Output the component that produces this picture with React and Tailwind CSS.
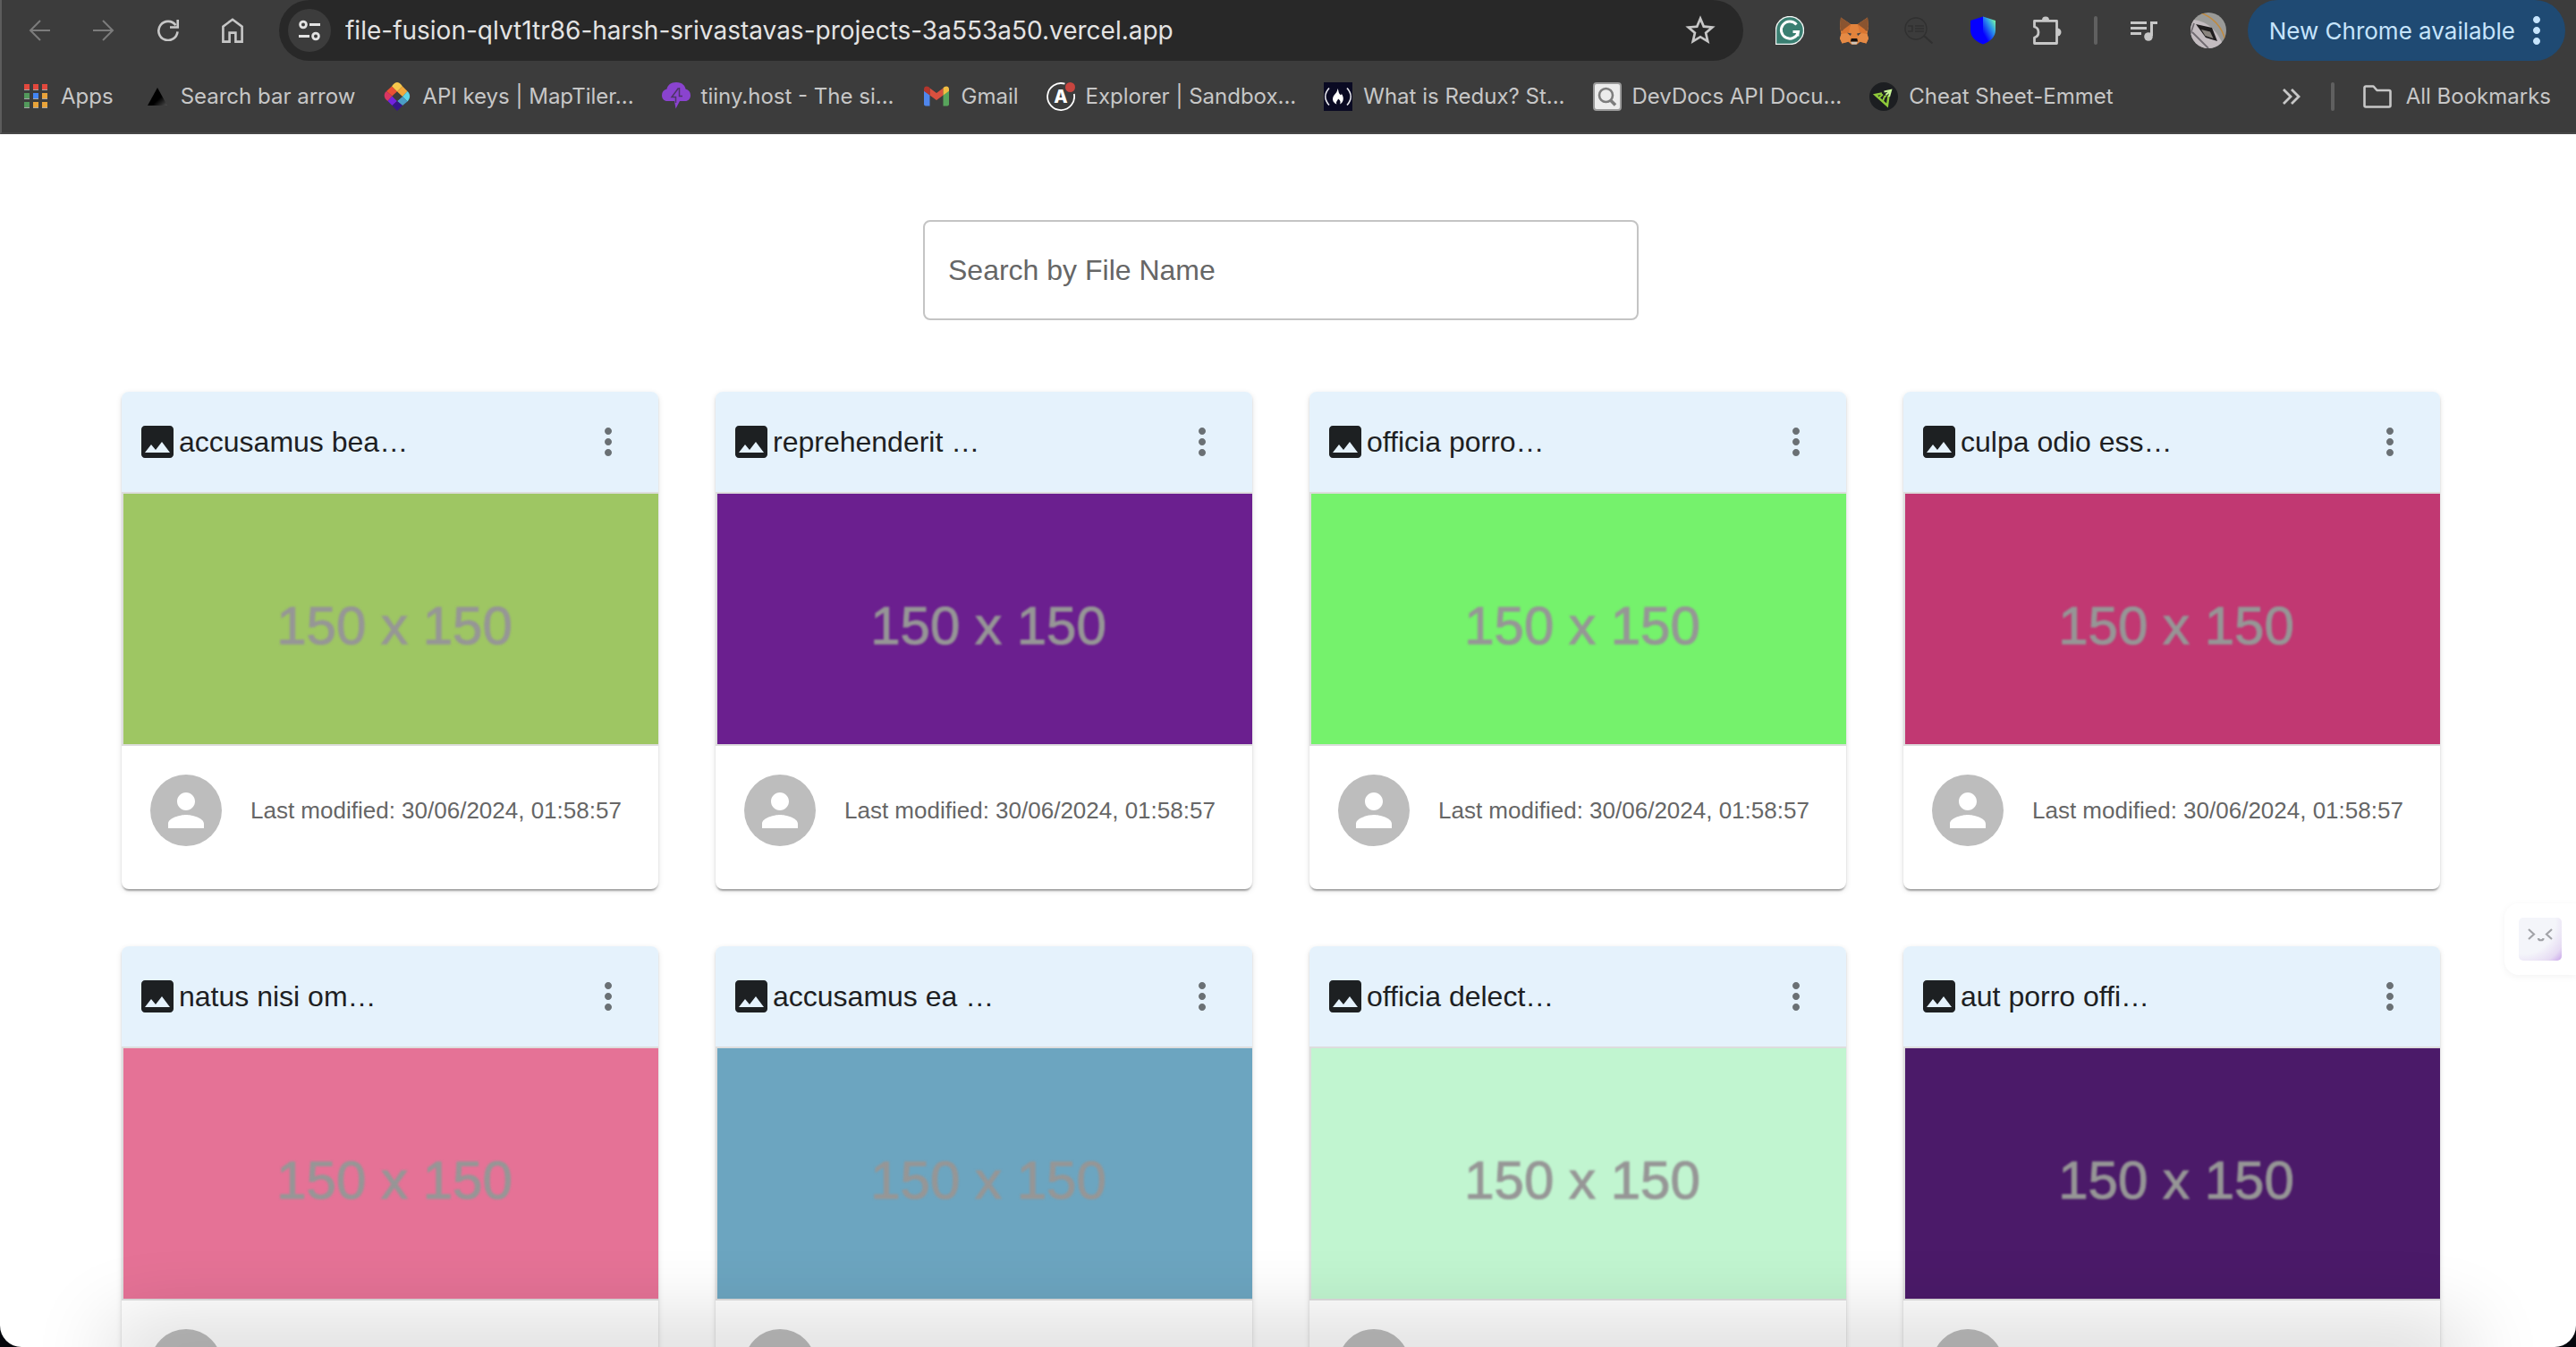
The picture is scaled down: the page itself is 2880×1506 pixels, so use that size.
import React from "react";

const files = [
  { title: "accusamus bea…", color: "bg-[#9ec663]" },
  { title: "reprehenderit …", color: "bg-[#6b1f8f]" },
  { title: "officia porro…", color: "bg-[#75f26c]" },
  { title: "culpa odio ess…", color: "bg-[#c13872]" },
  { title: "natus nisi om…", color: "bg-[#e57296]" },
  { title: "accusamus ea …", color: "bg-[#6ca5c0]" },
  { title: "officia delect…", color: "bg-[#c1f5d0]" },
  { title: "aut porro offi…", color: "bg-[#4b1a69]" },
];

function BackIcon() {
  return (
    <svg viewBox="0 0 24 24" className="size-6" fill="none" stroke="currentColor" strokeWidth="2">
      <path d="M24 12H2M13 1 2 12l11 11" />
    </svg>
  );
}

function ForwardIcon() {
  return (
    <svg viewBox="0 0 24 24" className="size-6" fill="none" stroke="currentColor" strokeWidth="2">
      <path d="M0 12h22M11 1l11 11-11 11" />
    </svg>
  );
}

function ReloadIcon() {
  return (
    <svg viewBox="0 0 24 24" className="size-6" fill="none" stroke="currentColor" strokeWidth="2.6">
      <path d="M20.5 6.2A10.6 10.6 0 1 0 22.5 13.4" />
      <path d="M22.7 0v8.5H14" />
    </svg>
  );
}

function HomeIcon() {
  return (
    <svg viewBox="0 0 24 28" className="h-7 w-6" fill="none" stroke="currentColor" strokeWidth="2.6">
      <path d="M1.4 26.6V9.6L12 1.8l10.6 7.8v17H15.4v-10H8.6v10z" />
    </svg>
  );
}

function TuneIcon() {
  return (
    <svg viewBox="0 0 24 24" className="size-6" fill="none" stroke="currentColor" strokeWidth="2.8">
      <circle cx="5" cy="5.5" r="3.4" />
      <path d="M12 5.5h12M0 18.5h12" />
      <circle cx="19" cy="18.5" r="3.4" />
    </svg>
  );
}

function StarIcon() {
  return (
    <svg viewBox="0 0 24 24" className="size-10" fill="currentColor">
      <path d="M22 9.24l-7.19-.62L12 2 9.19 8.63 2 9.24l5.46 4.73L5.82 21 12 17.27 18.18 21l-1.63-7.03L22 9.24zM12 15.4l-3.76 2.27 1-4.28-3.32-2.88 4.38-.38L12 6.1l1.71 4.04 4.38.38-3.32 2.88 1 4.28L12 15.4z" />
    </svg>
  );
}

function GrammarlyIcon() {
  return (
    <svg viewBox="0 0 32 32" className="size-8">
      <path d="M.5 31.500V16A15.500 15.500 0 1 1 16 31.500z" fill="#3a7f72" stroke="#f2f5f4" strokeWidth="1.400" />
      <path d="M23.500 9.500A9.600 9.600 0 1 0 25.400 17.600H19.500" fill="none" stroke="#fff" strokeWidth="3" />
      <path d="M25.600 16.100v6.400" stroke="#fff" strokeWidth="1.600" />
    </svg>
  );
}

function FoxIcon() {
  return (
    <svg viewBox="0 0 32 32" className="size-8">
      <path d="M1 1.500 12 9h8L31 1.500 32 12l-1.500 8 1.500 5-2.500 5.500-7-1.800-3.500 3h-6l-3.500-3-7 1.800L0 25l1.500-5L0 12z" fill="#e2833c" />
      <path d="M1 1.500 12 9l-2 5.500-8.500 2.500L0 12zM31 1.500 20 9l2 5.500 8.500 2.500L32 12z" fill="#8a5430" />
      <path d="m12 9-2 9-8.500 2L4 15zM20 9l2 9 8.500 2L28 15z" fill="#d97531" />
      <path d="m1.500 20 9-.5 2 5-3 4-7 2L0 25zM30.500 20l-9-.5-2 5 3 4 7 2L32 25z" fill="#e58a45" />
      <path d="m8 18.500 5 1-1.200 2.500zM24 18.500l-5 1 1.200 2.500z" fill="#3f4247" />
      <path d="M12 28.500h8l-1.500 3h-5z" fill="#cfc5ba" />
      <path d="M12.800 25h6.400l1 3.500h-8.400z" fill="#15110f" />
    </svg>
  );
}

function ReaderSearchIcon() {
  return (
    <svg viewBox="0 0 32 32" className="size-8" fill="none" stroke="#303030" strokeWidth="1.400">
      <circle cx="13" cy="14" r="12" />
      <path d="m22 22 9.500 8.500" strokeWidth="2.200" />
      <path d="M4 11h5v6H4M12 11h10M12 14h10M12 17h10" />
    </svg>
  );
}

function ShieldIcon() {
  return (
    <svg viewBox="0 0 28 32" className="h-8 w-7">
      <defs>
        <linearGradient id="shieldRight" x1="1" y1="0" x2="0.200" y2="1">
          <stop offset="0.080" stopColor="#7dfba0" />
          <stop offset="0.400" stopColor="#2d9ce8" />
          <stop offset="0.850" stopColor="#0500ff" />
        </linearGradient>
      </defs>
      <path d="M14 .5 0 5v10.500C0 23 5.500 28.500 14 31.500z" fill="#0500ff" />
      <path d="M14 .5 28 5v10.500c0 7.500-5.500 13-14 16z" fill="url(#shieldRight)" />
    </svg>
  );
}

function PuzzleIcon() {
  return (
    <svg viewBox="0 0 32 32" className="size-8" fill="none" stroke="currentColor" strokeWidth="2.800" strokeLinejoin="round">
      <path d="M1.500 5.400H26.500V30.500H1.500V24c6-1.500 6-10.500 0-12z" />
      <path d="M10 4.500a4 4 0 0 1 8 0z" fill="currentColor" stroke="none" />
      <path d="M27 13.500a4.500 4.500 0 0 1 0 9z" fill="currentColor" stroke="none" />
    </svg>
  );
}

function QueueIcon() {
  return (
    <svg viewBox="0 0 32 24" className="h-6 w-8" fill="none" stroke="currentColor" strokeWidth="3">
      <path d="M1 3.500h18M1 9.500h18M1 15.500h12" />
      <path d="M24.500 18V3.500H31" />
      <circle cx="21" cy="19" r="4.800" fill="currentColor" stroke="none" />
    </svg>
  );
}

function ProfilePicture() {
  return (
    <svg viewBox="0 0 40 40" className="size-10">
      <defs>
        <clipPath id="profileClip">
          <circle cx="20" cy="20" r="20" />
        </clipPath>
      </defs>
      <g clipPath="url(#profileClip)">
        <rect width="40" height="40" fill="#9a9a98" />
        <path d="M0 8c16 0 30 10 38 32H0z" fill="#c3bcc0" />
        <path d="M10 0c14 4 26 16 29 32" stroke="#c08a3e" strokeWidth="1.500" fill="none" />
        <path d="m6 13 18 4 6 15-13-4z" fill="#1f1d1e" />
        <path d="m12 19 10 2.500 3.500 7.500-9-3z" fill="#8a857f" />
        <path d="m2 22 10 10 8 8M4 12l-4 12" stroke="#6f6a70" strokeWidth="1.800" fill="none" />
      </g>
    </svg>
  );
}

function MoreIcon({ className }) {
  return (
    <svg viewBox="0 0 24 24" className={className} fill="currentColor">
      <path d="M12 8c1.100 0 2-.9 2-2s-.9-2-2-2-2 .9-2 2 .9 2 2 2zm0 2c-1.100 0-2 .9-2 2s.9 2 2 2 2-.9 2-2-.9-2-2-2zm0 6c-1.100 0-2 .9-2 2s.9 2 2 2 2-.9 2-2-.9-2-2-2z" />
    </svg>
  );
}

function AppsIcon() {
  const dots = ["#e2483d", "#e2483d", "#e2483d", "#539a5c", "#4285f4", "#e8a33a", "#539a5c", "#e8a33a", "#e8a33a"];
  return (
    <svg viewBox="0 0 32 32" className="size-8">
      {dots.map((fill, i) => (
        <g key={i}>
          <rect x={3 + (i % 3) * 10} y={2 + Math.floor(i / 3) * 10} width="6" height="7" fill="#a8a8a8" />
          <rect x={3 + (i % 3) * 10} y={2 + Math.floor(i / 3) * 10} width="6" height="6" fill={fill} />
        </g>
      ))}
    </svg>
  );
}

function TriangleIcon() {
  return (
    <svg viewBox="0 0 32 32" className="size-8">
      <defs>
        <linearGradient id="triangleFade" x1="0" y1="0" x2="1" y2="1">
          <stop offset="0.600" stopColor="#000" />
          <stop offset="1" stopColor="#505050" />
        </linearGradient>
      </defs>
      <path d="M18 6 29 26H7z" fill="url(#triangleFade)" />
    </svg>
  );
}

function MapTilerIcon() {
  return (
    <svg viewBox="0 0 32 32" className="size-8">
      <path d="M12 2q4-4 8 0l2 2.500-6 6-6-6z" fill="#f6c64c" />
      <path d="m22 4.500 5.500 5.500-5.500 6-6-5.500z" fill="#f2a83b" />
      <path d="m10 4.500 6 6-5.500 5L4 10z" fill="#ea5034" />
      <path d="M4 10l6.500 5.500-5 5.500C1 18 .5 13 4 10z" fill="#da3562" />
      <path d="M27.500 10c4 4 3 8 0 11.500L22 16z" fill="#5fd5e6" />
      <path d="m22 16 5.500 5.500L22 26l-6-5z" fill="#4b9dc6" />
      <path d="m10.500 15.500 5.500 5.500-5.500 5-5-5z" fill="#7223e0" />
      <path d="m16 21 6 5-6 6-5.500-6z" fill="#35158a" />
      <path d="m16 10.500 5.500 5.500-5.500 5-5.500-5.500z" fill="#3c3c3c" />
    </svg>
  );
}

function TiinyIcon() {
  return (
    <svg viewBox="0 0 32 32" className="size-8">
      <path d="M16 0c6 0 9.500 3 10.500 7.500C30 8.500 32 11 32 14.500c0 4-2.500 6.500-6 6.500h-6l-4.500 8.500L14 21H6c-3.500 0-6-2.500-6-6.500C0 11 2 8.500 5.500 7.500 6.500 3 10 0 16 0z" fill="#8a43cf" />
      <path d="m18.500 6.500-7.500 10h4.500V23M19.500 6v9.500h3.500" fill="none" stroke="#4d3566" strokeWidth="1.500" />
    </svg>
  );
}

function GmailIcon() {
  return (
    <svg viewBox="0 0 32 32" className="size-8">
      <path d="M2 9.500v15A2 2 0 0 0 4 26.500h4.500V14z" fill="#4f86ec" />
      <path d="M30 9.500v15a2 2 0 0 1-2 2h-4.500V14z" fill="#58a55c" />
      <path d="M8.500 6.500v8L16 20l7.500-5.500v-8L16 12z" fill="#d9503f" />
      <path d="M2 7.500C2 4.500 5 3.800 7 5l1.500 1.200v8.300L2 9.800z" fill="#b3352c" />
      <path d="M30 7.500c0-3-3-3.700-5-2.500l-1.500 1.200v8.300L30 9.800z" fill="#f2bd42" />
    </svg>
  );
}

function ApolloIcon() {
  return (
    <svg viewBox="0 0 32 32" className="size-8">
      <path d="M20.500 1.700A15 15 0 1 0 30.800 13" fill="none" stroke="#fff" strokeWidth="1.800" />
      <circle cx="26.500" cy="5.500" r="5.500" fill="#c8453f" />
      <text x="16" y="22.500" textAnchor="middle" fontSize="20" fontWeight="800" fontFamily="Inter, sans-serif" fill="#fff">A</text>
    </svg>
  );
}

function FreeCodeCampIcon() {
  return (
    <svg viewBox="0 0 32 32" className="size-8">
      <rect width="32" height="32" fill="#0a0a23" />
      <path d="M6 6.500c-5.500 6-5.500 13 0 19M26 6.500c5.500 6 5.500 13 0 19" fill="none" stroke="#e8e8ee" strokeWidth="1.700" />
      <path d="M15.500 7c1.500 3 .5 4.500 3 7 .8.800 1.500-.3 1-1.500 3.500 4 3 9.500-1.500 12 1.500-3-.2-5-2-6-.3 2-3 3.500-1.500 6-5-2-5.500-6.500-3-10 2-2.500 3.800-4 4-7.500z" fill="#fff" />
    </svg>
  );
}

function DevDocsIcon() {
  return (
    <svg viewBox="0 0 32 32" className="size-8">
      <rect x="1" y="1" width="30" height="30" rx="3" fill="#ececec" stroke="#9a9a9a" strokeWidth="2" />
      <circle cx="14.500" cy="14.500" r="7.500" fill="none" stroke="#7d7d7d" strokeWidth="2.600" />
      <path d="m19.500 20 5.500 5.500" stroke="#7d7d7d" strokeWidth="3.600" />
    </svg>
  );
}

function EmmetIcon() {
  return (
    <svg viewBox="0 0 32 32" className="size-8">
      <circle cx="16" cy="16" r="16" fill="#1c1e21" />
      <path d="M14 12.500 6.500 14 20 26l1.500-11" fill="none" stroke="#8fca3a" strokeWidth="2.400" />
      <path d="m11 17 4-3.500M15 21l2-5 2-1" fill="none" stroke="#8fca3a" strokeWidth="2" />
      <path d="m16.500 10.500 7.500-1.500-2 7M23 10l-4.500 4" fill="none" stroke="#c9f598" strokeWidth="2.200" />
    </svg>
  );
}

function ChevronsIcon() {
  return (
    <svg viewBox="0 0 24 24" className="size-6" fill="none" stroke="currentColor" strokeWidth="2.800">
      <path d="m3 4 8 8-8 8M12 4l8 8-8 8" />
    </svg>
  );
}

function FolderIcon() {
  return (
    <svg viewBox="0 0 32 32" className="size-8" fill="none" stroke="currentColor" strokeWidth="2.600" strokeLinejoin="round">
      <path d="M1.500 26V6a1.500 1.500 0 0 1 1.500-1.500h8.500l4 4.500H29A1.500 1.500 0 0 1 30.500 10.500V26a1.500 1.500 0 0 1-1.500 1.500H3A1.500 1.500 0 0 1 1.500 26z" />
    </svg>
  );
}

const bookmarks = [
  { label: "Apps", Icon: AppsIcon },
  { label: "Search bar arrow", Icon: TriangleIcon },
  { label: "API keys | MapTiler...", Icon: MapTilerIcon },
  { label: "tiiny.host - The si...", Icon: TiinyIcon },
  { label: "Gmail", Icon: GmailIcon },
  { label: "Explorer | Sandbox...", Icon: ApolloIcon },
  { label: "What is Redux? St...", Icon: FreeCodeCampIcon },
  { label: "DevDocs API Docu...", Icon: DevDocsIcon },
  { label: "Cheat Sheet-Emmet", Icon: EmmetIcon },
];

function ToolbarButton({ label, className = "text-[#c7c7c7]", children }) {
  return (
    <button type="button" aria-label={label} className={`flex h-[68px] w-[72px] shrink-0 items-center justify-center ${className}`}>
      {children}
    </button>
  );
}

function BrowserChrome() {
  return (
    <header className="border-b-2 border-l-2 border-b-[#474747] border-l-[#5c5c5c] bg-[#3c3c3c] font-[Inter,sans-serif]">
      <div className="flex items-center pr-3 pl-1.5">
        <ToolbarButton label="Back" className="text-[#7c7c7c]"><BackIcon /></ToolbarButton>
        <ToolbarButton label="Forward" className="text-[#7c7c7c]"><ForwardIcon /></ToolbarButton>
        <ToolbarButton label="Reload"><ReloadIcon /></ToolbarButton>
        <ToolbarButton label="Home"><HomeIcon /></ToolbarButton>
        <div className="mx-4 flex h-[68px] min-w-0 flex-1 items-center rounded-full bg-[#282828] pr-7 pl-2.5">
          <button type="button" aria-label="Site information" className="flex size-12 shrink-0 items-center justify-center rounded-full bg-[#3c3c3c] text-[#e3e3e3]">
            <TuneIcon />
          </button>
          <input
            aria-label="Address"
            defaultValue="file-fusion-qlvt1tr86-harsh-srivastavas-projects-3a553a50.vercel.app"
            className="ml-4 h-12 min-w-0 flex-1 bg-transparent text-[28px] text-[#e3e3e3] outline-none"
          />
          <button type="button" aria-label="Bookmark this page" className="text-[#c7c7c7]"><StarIcon /></button>
        </div>
        <ToolbarButton label="Grammarly"><GrammarlyIcon /></ToolbarButton>
        <ToolbarButton label="Wallet"><FoxIcon /></ToolbarButton>
        <ToolbarButton label="Page search"><ReaderSearchIcon /></ToolbarButton>
        <ToolbarButton label="Shield"><ShieldIcon /></ToolbarButton>
        <ToolbarButton label="Extensions"><PuzzleIcon /></ToolbarButton>
        <div className="mx-4 h-8 w-1 rounded-full bg-[#606060]" />
        <ToolbarButton label="Media controls"><QueueIcon /></ToolbarButton>
        <ToolbarButton label="Profile"><ProfilePicture /></ToolbarButton>
        <button type="button" className="ml-2 flex h-[68px] items-center rounded-full bg-[#1f4a73] pr-2 pl-6 text-[26px] whitespace-nowrap text-[#c6e4fc]">
          New Chrome available
          <MoreIcon className="size-12" />
        </button>
      </div>
      <nav aria-label="Bookmarks" className="flex h-20 items-center pr-7 pl-[22px] text-2xl text-[#c7c7c7]">
        <div className="flex flex-1 items-center gap-[31px]">
          {bookmarks.map(({ label, Icon }) => (
            <a key={label} href="#" className="flex items-center gap-3 whitespace-nowrap">
              <Icon />
              {label}
            </a>
          ))}
        </div>
        <button type="button" aria-label="More bookmarks"><ChevronsIcon /></button>
        <div className="mx-8 h-8 w-1 rounded-full bg-[#606060]" />
        <button type="button" className="flex items-center gap-4 whitespace-nowrap"><FolderIcon />All Bookmarks</button>
      </nav>
    </header>
  );
}

function FileCard({ title, color }) {
  return (
    <article className="overflow-hidden rounded-lg bg-white shadow-[0_4px_2px_-2px_rgba(0,0,0,0.2),0_2px_2px_0_rgba(0,0,0,0.14),0_2px_6px_0_rgba(0,0,0,0.12)]">
      <div className="flex h-28 items-center bg-[#e5f2fc] px-4">
        <svg viewBox="0 0 24 24" className="size-12 shrink-0 text-[#1d2022]" fill="currentColor">
          <path d="M21 19V5c0-1.100-.9-2-2-2H5c-1.100 0-2 .9-2 2v14c0 1.100.9 2 2 2h14c1.100 0 2-.9 2-2zM8.500 13.500l2.500 3.010L14.500 12l4.500 6H5l3.500-4.500z" />
        </svg>
        <h2 className="flex-1 truncate text-[32px] leading-12 text-[#1d2022]">{title}</h2>
        <button type="button" aria-label={`Options for ${title}`} className="flex size-20 items-center justify-center text-[#6a7074]">
          <MoreIcon className="size-12" />
        </button>
      </div>
      <div className="border-y-2 border-l-2 border-[#dddddd]">
        <div className={`flex h-[280px] items-center justify-center ${color}`}>
          <span className="pt-4 pl-2 text-[60px] leading-none text-[#969696] blur-[1px] [-webkit-text-stroke:1px_#969696]">150 x 150</span>
        </div>
      </div>
      <div className="flex items-center gap-8 px-8 pt-8 pb-12">
        <div className="flex size-20 shrink-0 items-center justify-center rounded-full bg-[#bdbdbd] text-white">
          <svg viewBox="0 0 24 24" className="size-[60px]" fill="currentColor">
            <path d="M12 12c2.210 0 4-1.790 4-4s-1.790-4-4-4-4 1.790-4 4 1.790 4 4 4zm0 2c-2.670 0-8 1.340-8 4v2h16v-2c0-2.660-5.330-4-8-4z" />
          </svg>
        </div>
        <p className="text-[26px] leading-none whitespace-nowrap text-[#666666]">Last modified: 30/06/2024, 01:58:57</p>
      </div>
    </article>
  );
}

function AssistantTab() {
  return (
    <button
      type="button"
      aria-label="Open assistant"
      className="absolute top-[1010px] right-0 flex size-20 items-center justify-center rounded-l-2xl bg-white shadow-[0_2px_8px_rgba(0,0,0,0.05)]"
    >
      <svg viewBox="0 0 48 48" className="size-12">
        <defs>
          <radialGradient id="assistantFill" cx="0.100" cy="0.100" r="1.250">
            <stop offset="0.600" stopColor="#f4f5fa" />
            <stop offset="0.850" stopColor="#e6dbf3" />
            <stop offset="1" stopColor="#cbaaea" />
          </radialGradient>
        </defs>
        <rect width="48" height="48" rx="5" fill="url(#assistantFill)" />
        <path d="m11 13 6 5.500-6 5.500M37 13l-6 5.500 6 5.500M22 23c0 3 5.500 3 5.500 0" fill="none" stroke="#a2a3a8" strokeWidth="2.200" />
      </svg>
    </button>
  );
}

export default function App() {
  return (
    <div className="h-screen bg-[#05070c]">
      <div className="relative h-full overflow-hidden rounded-b-3xl bg-white">
        <BrowserChrome />
        <main className="pt-24 pr-[152px] pl-[136px] font-['Liberation_Sans',Arial,sans-serif]">
          <input
            type="search"
            aria-label="Search by File Name"
            placeholder="Search by File Name"
            className="mx-auto block h-28 w-full max-w-[800px] rounded-lg border-2 border-[#c4c4c4] px-[26px] text-[32px] text-[#1d2022] outline-none placeholder:text-[#666666] placeholder:opacity-100"
          />
          <section aria-label="Files" className="mt-20 grid grid-cols-4 gap-16">
            {files.map((file) => (
              <FileCard key={file.title} {...file} />
            ))}
          </section>
        </main>
        <AssistantTab />
        <div className="pointer-events-none absolute inset-x-36 -bottom-5 h-5 shadow-[0_0_90px_20px_rgba(0,0,0,0.2)]" />
      </div>
    </div>
  );
}
